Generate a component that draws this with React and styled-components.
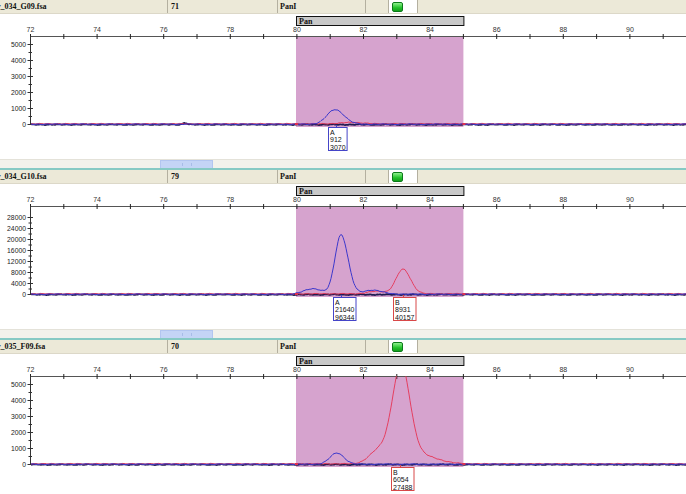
import React from "react";
import styled, { createGlobalStyle } from "styled-components";

const GlobalStyle = createGlobalStyle`
  html, body {
    margin: 0;
    padding: 0;
    background: #fff;
    overflow: hidden;
  }
  body {
    font-family: "Liberation Sans", Arial, sans-serif;
  }
`;

const W = 686;
const CHART_H = 145;
const AXIS_Y = 22;
const BASE_Y = 110;
const xOf = (v) => 30.5 + (v - 72) * 33.3;

const panels = [
  {
    file: "r_034_G09.fsa",
    num: "71",
    yMax: 5000,
    yLabelStep: 1000,
    yTickStep: 500,
    scale: 16 / 1000,
    blue: [[335, 912, 8, 9]],
    red: [[352, 90, 10, 10]],
    dark: [[185, 110, 2, 2]],
    labels: [{ peak: 336, left: 328, color: "#4545c8", lines: ["A", "912", "3070"] }],
  },
  {
    file: "r_034_G10.fsa",
    num: "79",
    yMax: 28000,
    yLabelStep: 4000,
    yTickStep: 2000,
    scale: 2.75 / 1000,
    blue: [
      [341, 21640, 6, 7],
      [313, 2000, 9, 9],
      [372, 1500, 8, 10],
    ],
    red: [
      [403, 8931, 7, 7.5],
      [376, 900, 8, 8],
    ],
    dark: [],
    labels: [
      { peak: 341, left: 333, color: "#4545c8", lines: ["A", "21640", "96344"] },
      { peak: 403, left: 393, color: "#d84848", lines: ["B", "8931", "40157"] },
    ],
  },
  {
    file: "r_035_F09.fsa",
    num: "70",
    yMax: 5000,
    yLabelStep: 1000,
    yTickStep: 500,
    scale: 16 / 1000,
    blue: [[337, 700, 7, 7]],
    red: [
      [401, 6054, 9, 9],
      [378, 800, 9, 9],
      [422, 500, 12, 16],
    ],
    dark: [],
    labels: [{ peak: 400, left: 391, color: "#d84848", lines: ["B", "6054", "27488"] }],
  },
];

const gauss = (x, peaks) =>
  peaks.reduce((sum, [c, h, sl, sr]) => {
    const s = x < c ? sl : sr;
    const d = x - c;
    return sum + h * Math.exp(-(d * d) / (2 * s * s));
  }, 0);

const noise = (x, seed) =>
  0.5 * Math.sin(x * 0.71 + seed) + 0.35 * Math.sin(x * 1.93 + seed * 2.1) + 0.25 * Math.sin(x * 0.23 + seed * 3.7);

const tracePath = (peaks, scale, seed, offset) => {
  let d = "";
  for (let x = 31; x <= W; x += 1) {
    const y = BASE_Y + offset - gauss(x, peaks) * scale + noise(x, seed) * 0.5;
    d += (x === 31 ? "M" : "L") + x + " " + y.toFixed(2) + " ";
  }
  return d;
};

const Page = styled.div`
  width: ${W}px;
  display: flex;
  flex-direction: column;
`;

const Panel = styled.section`
  display: flex;
  flex-direction: column;
  height: 170px;
`;

const Header = styled.div`
  display: flex;
  height: 14px;
  background: #ece9d8;
  border-bottom: 1px solid #dcd8c8;
  box-sizing: border-box;
  font: bold 8px "Liberation Serif", "Times New Roman", serif;
  color: #111;
`;

const Cell = styled.div`
  width: ${(p) => p.$w}px;
  flex: ${(p) => (p.$w ? "none" : "1")};
  box-sizing: border-box;
  border-right: ${(p) => (p.$w ? "1px solid #b4b0a0" : "none")};
  padding-left: ${(p) => p.$pad || 0}px;
  background: ${(p) => (p.$white ? "#fff" : "transparent")};
  line-height: 13px;
  white-space: nowrap;
  overflow: hidden;
  display: flex;
  align-items: center;
`;

const FileName = styled.span`
  margin-left: -3px;
`;

const StatusLight = styled.span`
  width: 9px;
  height: 8px;
  border-radius: 2px;
  border: 1px solid #0b7a1a;
  background: linear-gradient(#8cf08c, #22c02a 60%, #14a01c);
`;

const Chart = styled.svg`
  display: block;
  width: ${W}px;
  height: ${CHART_H}px;
  font-family: "Liberation Sans", Arial, sans-serif;
`;

const ScrollBand = styled.div`
  height: 9px;
  box-sizing: border-box;
  background: #f2f1eb;
  border-top: 1px solid #e4e2d9;
  padding-left: 160px;
  display: flex;
  align-items: flex-end;
`;

const Thumb = styled.div`
  width: 53px;
  height: 8px;
  box-sizing: border-box;
  background: #c4d4f6;
  border: 1px solid #b2c5f0;
  border-bottom: none;
  display: flex;
  justify-content: center;
  align-items: center;
  &::after {
    content: "";
    width: 8px;
    height: 3px;
    border-left: 1px solid #a8bce8;
    border-right: 1px solid #a8bce8;
  }
`;

const Divider = styled.div`
  height: 2px;
  background: #86c9c4;
`;

const XAxis = () => {
  const ticks = [];
  for (let v = 72; v <= 91; v += 1) ticks.push(v);
  return (
    <g>
      <line x1={30.5} y1={AXIS_Y + 0.5} x2={W} y2={AXIS_Y + 0.5} stroke="#555" strokeWidth="1" />
      {ticks.map((v) => (
        <line key={v} x1={xOf(v)} y1={AXIS_Y - 2} x2={xOf(v)} y2={AXIS_Y + 3} stroke="#222" strokeWidth="1" />
      ))}
      {ticks
        .filter((v) => v % 2 === 0)
        .map((v) => (
          <text key={"l" + v} x={xOf(v)} y={AXIS_Y - 4} fontSize="7" fill="#333" textAnchor="middle">
            {v}
          </text>
        ))}
    </g>
  );
};

const YAxis = ({ yMax, yLabelStep, yTickStep, scale }) => {
  const ticks = [];
  for (let v = 0; v <= yMax; v += yTickStep) ticks.push(v);
  return (
    <g>
      <line x1={30.5} y1={AXIS_Y} x2={30.5} y2={BASE_Y + 1} stroke="#333" strokeWidth="1" />
      {ticks.map((v) => {
        const y = BASE_Y - v * scale + 0.5;
        const major = v % yLabelStep === 0;
        return (
          <g key={v}>
            <line x1={major ? 27.5 : 28.5} y1={y} x2={major ? 33 : 32} y2={y} stroke="#333" strokeWidth="1" />
            {major && (
              <text x={26} y={y + 2.5} fontSize="6.8" fill="#222" textAnchor="end">
                {v}
              </text>
            )}
          </g>
        );
      })}
    </g>
  );
};

const PeakLabel = ({ peak, left, color, lines }) => {
  const width = Math.max(...lines.map((l) => l.length)) * 3.9 + 3;
  return (
    <g>
      <line x1={peak + 0.5} y1={BASE_Y + 1} x2={peak + 0.5} y2={113} stroke={color} strokeWidth="1" />
      <rect x={left + 0.5} y={113.5} width={width} height={23} fill="#fff" stroke={color} strokeWidth="1" />
      {lines.map((l, i) => (
        <text key={i} x={left + 2} y={120.5 + i * 7.5} fontSize="7" fill="#111">
          {l}
        </text>
      ))}
    </g>
  );
};

const Electropherogram = ({ panel, idx }) => {
  const clipId = "plot" + idx;
  const binL = 296;
  const binR = xOf(85);
  return (
    <Chart viewBox={`0 0 ${W} ${CHART_H}`}>
      <defs>
        <clipPath id={clipId}>
          <rect x={31} y={AXIS_Y} width={W} height={CHART_H - AXIS_Y} />
        </clipPath>
      </defs>
      <rect x={binL + 0.5} y={2.5} width={binR - binL} height={9} fill="#c8c8c8" stroke="#111" strokeWidth="1" />
      <text x={binL + 3} y={10} fontSize="8" fontWeight="bold" fontFamily='"Liberation Serif", serif' fill="#111">
        Pan
      </text>
      <rect x={binL} y={AXIS_Y} width={binR - binL} height={BASE_Y - AXIS_Y + 3} fill="#d6a3ce" />
      <XAxis />
      <YAxis {...panel} />
      <g clipPath={`url(#${clipId})`} fill="none" strokeLinejoin="round">
        <path d={tracePath(panel.dark, panel.scale, idx * 5 + 1, 0.6)} stroke="#201c50" strokeWidth="1.7" />
        <path d={tracePath(panel.red, panel.scale, idx * 5 + 2, -0.2)} stroke="#e63454" strokeWidth="1" opacity="0.9" />
        <path d={tracePath(panel.blue, panel.scale, idx * 5 + 3, 0.2)} stroke="#3c38cc" strokeWidth="1" />
      </g>
      <rect x={binL - 1} y={BASE_Y - 1} width={3} height={2} fill="#e03050" />
      <rect x={binR - 1} y={BASE_Y - 1} width={3} height={2} fill="#e03050" />
      {panel.labels.map((l, i) => (
        <PeakLabel key={i} {...l} />
      ))}
    </Chart>
  );
};

export default function App() {
  return (
    <>
      <GlobalStyle />
      <Page>
        {panels.map((p, i) => (
          <Panel key={i}>
            <Header>
              <Cell $w={168}>
                <FileName>{p.file}</FileName>
              </Cell>
              <Cell $w={110} $pad={3}>
                {p.num}
              </Cell>
              <Cell $w={88} $pad={2}>
                PanI
              </Cell>
              <Cell $w={23} />
              <Cell $w={29} $pad={3} $white>
                <StatusLight />
              </Cell>
              <Cell />
            </Header>
            <Electropherogram panel={p} idx={i} />
            <ScrollBand>
              <Thumb />
            </ScrollBand>
            <Divider />
          </Panel>
        ))}
      </Page>
    </>
  );
}
